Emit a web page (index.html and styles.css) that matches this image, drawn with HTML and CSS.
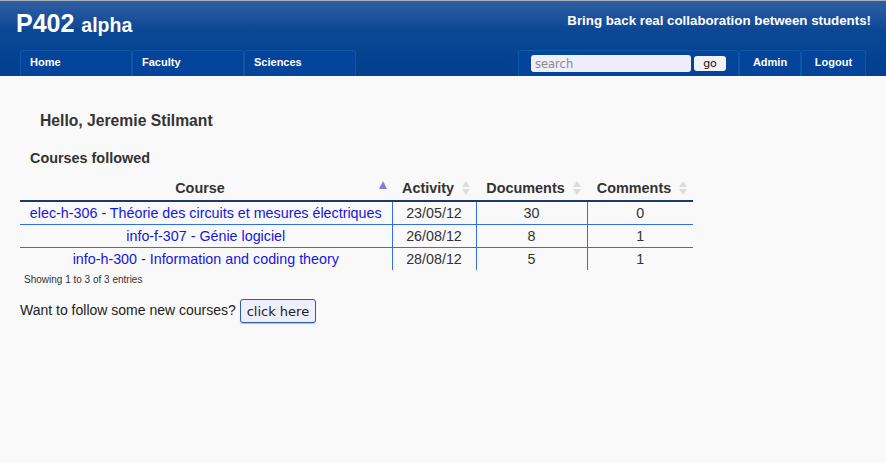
FILE: index.html
```html
<!DOCTYPE html>
<html>
<head>
<meta charset="utf-8">
<link rel="stylesheet" href="styles.css">
</head>
<body>
<header class="top">
  <div class="brand-row">
    <h1 class="brand">P402 <span class="alpha">alpha</span></h1>
    <div class="slogan">Bring back real collaboration between students!</div>
  </div>
  <nav class="nav">
    <div class="nav-left">
      <a class="tab" href="#">Home</a>
      <a class="tab" href="#">Faculty</a>
      <a class="tab" href="#">Sciences</a>
    </div>
    <div class="nav-right">
      <form class="tab search-tab">
        <input class="search" type="text" placeholder="search">
        <button class="go" type="button">go</button>
      </form>
      <a class="tab small admin" href="#">Admin</a>
      <a class="tab small logout" href="#">Logout</a>
    </div>
  </nav>
</header>
<main class="content">
  <h2 class="hello">Hello, Jeremie Stilmant</h2>
  <h3 class="section">Courses followed</h3>
  <table class="courses">
    <colgroup>
      <col class="c-course">
      <col class="c-act">
      <col class="c-doc">
      <col class="c-com">
    </colgroup>
    <thead>
      <tr>
        <th>Course<span class="sort asc"></span></th>
        <th>Activity<span class="sort both"></span></th>
        <th>Documents<span class="sort both"></span></th>
        <th>Comments<span class="sort both"></span></th>
      </tr>
    </thead>
    <tbody>
      <tr>
        <td><a href="#">elec-h-306 - Théorie des circuits et mesures électriques</a></td>
        <td>23/05/12</td><td>30</td><td>0</td>
      </tr>
      <tr>
        <td><a href="#">info-f-307 - Génie logiciel</a></td>
        <td>26/08/12</td><td>8</td><td>1</td>
      </tr>
      <tr>
        <td><a href="#">info-h-300 - Information and coding theory</a></td>
        <td>28/08/12</td><td>5</td><td>1</td>
      </tr>
    </tbody>
  </table>
  <div class="info">Showing 1 to 3 of 3 entries</div>
  <p class="follow">Want to follow some new courses? <button class="click" type="button">click here</button></p>
</main>
</body>
</html>
```
FILE: styles.css
```css
html, body {
  margin: 0;
  padding: 0;
}
body {
  background: #f9f9f9;
  font-family: "Liberation Sans", Arial, sans-serif;
  color: #333;
  height: 463px;
  overflow: hidden;
}
.top {
  height: 75px;
  border-top: 1px solid #a9b0bb;
  background: linear-gradient(to bottom, #2f5fa2 0%, #0b4795 40%, #00408f 100%);
  display: flex;
  flex-direction: column;
  justify-content: space-between;
}
.brand-row {
  display: flex;
  justify-content: space-between;
  align-items: flex-start;
  padding: 0 15px 0 16px;
}
.brand {
  margin: 7px 0 0 0;
  font-size: 25px;
  line-height: 30px;
  color: #fff;
  font-weight: bold;
}
.alpha {
  font-size: 19.5px;
}
.slogan {
  margin-top: 12px;
  color: #fff;
  font-weight: bold;
  font-size: 13.3px;
  line-height: 16px;
}
.nav {
  display: flex;
  justify-content: space-between;
  padding: 0 20px;
  height: 26px;
}
.nav-left, .nav-right {
  display: flex;
}
.tab {
  box-sizing: border-box;
  height: 26px;
  width: 112px;
  padding: 0 9px 3px 9px;
  background: #04449a;
  border: 1px solid #0b57a8;
  border-bottom: none;
  border-radius: 3px 3px 0 0;
  color: #fff;
  font-weight: bold;
  font-size: 11px;
  line-height: 14px;
  text-decoration: none;
  display: flex;
  align-items: center;
}
.tab.small {
  padding: 0 0 3px 0;
  justify-content: center;
}
.tab.admin {
  width: 62px;
}
.tab.logout {
  width: 65px;
}
.search-tab {
  width: 221px;
  margin: 0;
  padding: 0 0 0 12px;
  gap: 3px;
}
.search {
  box-sizing: border-box;
  width: 160px;
  height: 17px;
  border: none;
  border-radius: 3px;
  background: #eeeefd;
  padding: 0 4px;
  font-family: "DejaVu Sans", sans-serif;
  font-size: 11.5px;
  color: #333;
  outline: none;
}
.search::placeholder {
  color: #8a8a8a;
}
.go {
  box-sizing: border-box;
  width: 32px;
  height: 15px;
  border: none;
  border-radius: 3px;
  background: #f2f2fc;
  padding: 0;
  font-family: "DejaVu Sans", sans-serif;
  font-size: 11px;
  color: #111;
  line-height: 15px;
}
.content {
  padding: 0 20px;
}
.hello {
  margin: 35px 0 0 20px;
  font-size: 15.7px;
  line-height: 20px;
  font-weight: bold;
  color: #333;
}
.section {
  margin: 19px 0 0 10px;
  font-size: 14.4px;
  line-height: 17px;
  font-weight: bold;
  color: #333;
}
.courses {
  margin-top: 9px;
  width: 673px;
  table-layout: fixed;
  border-collapse: collapse;
  font-size: 14.3px;
}
col.c-course { width: 372px; }
col.c-act { width: 84px; }
col.c-doc { width: 111px; }
col.c-com { width: 106px; }
.courses th {
  position: relative;
  height: 24px;
  padding: 0 12px 0 0;
  font-weight: bold;
  font-size: 14.4px;
  color: #333;
  border-bottom: 2px solid #1b3a6b;
  text-align: center;
  line-height: 20px;
}
.sort {
  position: absolute;
  right: 5px;
  top: 4px;
  width: 9px;
  height: 16px;
}
.sort.asc::before {
  content: "";
  position: absolute;
  left: 0;
  top: 1px;
  border-left: 4.5px solid transparent;
  border-right: 4.5px solid transparent;
  border-bottom: 8px solid #7d80d8;
}
.sort.both::before, .sort.both::after {
  content: "";
  position: absolute;
  left: 0;
  border-left: 4.5px solid transparent;
  border-right: 4.5px solid transparent;
}
.sort.both::before {
  top: 1px;
  border-bottom: 6px solid #dcdcdc;
}
.sort.both::after {
  top: 9px;
  border-top: 6px solid #dcdcdc;
}
.courses th:first-child .sort {
  right: 4px;
}
.courses td {
  height: 22px;
  padding: 0;
  text-align: center;
  line-height: 22px;
  color: #333;
  border-left: 1px solid #2f6cf0;
  border-top: 1px solid #2f6cf0;
}
.courses tbody tr:first-child td {
  border-top: none;
}
.courses td:first-child {
  border-left: none;
}
.courses a {
  color: #1616dd;
  text-decoration: none;
}
.info {
  margin: 3px 0 0 4px;
  font-size: 10px;
  line-height: 13px;
  color: #333;
}
.follow {
  margin: 12px 0 0 0;
  font-size: 14px;
  line-height: 24px;
  color: #222;
}
.click {
  box-sizing: border-box;
  height: 24px;
  padding: 0 6px;
  border: 1px solid #2f5fa8;
  border-radius: 3px;
  background: #eeeefd;
  font-family: "DejaVu Sans", sans-serif;
  font-size: 13px;
  color: #222;
  vertical-align: middle;
  box-shadow: 0 1px 1px rgba(0,0,0,0.25);
}
```
